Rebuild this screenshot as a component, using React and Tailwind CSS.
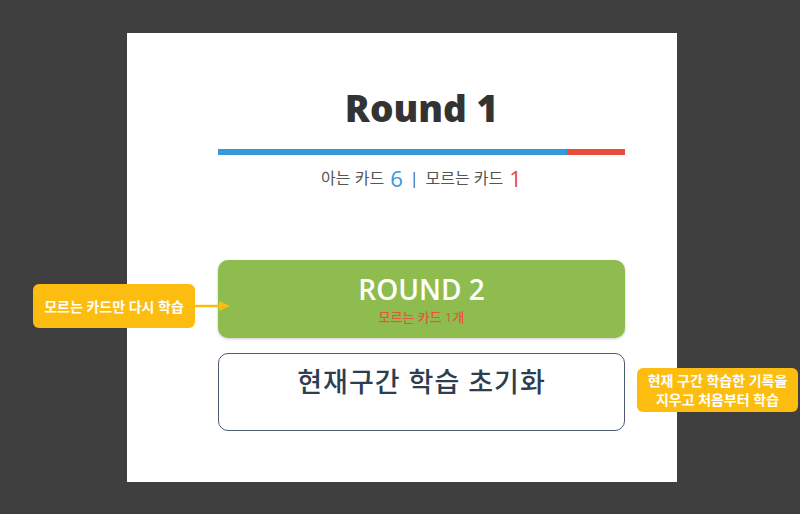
import React from 'react';

const known = 6;
const unknown = 1;

const App = () => {
  const total = known + unknown;
  return (
    <div
      className="relative w-[800px] h-[514px] bg-[#3f3f3f] overflow-hidden"
      style={{ fontFamily: '"Open Sans", "Noto Sans CJK KR", sans-serif' }}
    >
      <div className="ml-[127px] pt-[33px]">
        <div className="w-[550px] h-[449px] bg-white pl-[91px] pr-[52px] pt-[54px]">
          <h1 className="text-center text-[37px] leading-[42px] font-extrabold text-[#333333]">Round 1</h1>

          <div className="mt-[20px] flex h-[6px] w-full">
            <div className="h-full bg-[#3498db]" style={{ width: `${(known / total) * 100}%` }} />
            <div className="h-full flex-1 bg-[#e74c3c]" />
          </div>

          <div className="mt-[11px] flex items-center justify-center h-[24px] text-[16px] text-[#555555]">
            <span>아는 카드</span>
            <span className="ml-[6px] text-[22px] text-[#3498db]">{known}</span>
            <span className="mx-[7px] text-[#3a5a80]">|</span>
            <span>모르는 카드</span>
            <span className="ml-[6px] text-[22px] text-[#e74c3c]">{unknown}</span>
          </div>

          <button className="mt-[70px] flex h-[78px] w-full flex-col items-center rounded-[10px] bg-[#8fbc4f] pt-[10px] shadow-[0_1px_3px_rgba(0,0,0,0.2)]">
            <span className="text-[28px] leading-[38px] font-semibold text-white">ROUND 2</span>
            <span className="text-[13px] leading-[18px] font-medium text-[#e8543f]">모르는 카드 {unknown}개</span>
          </button>

          <button className="mt-[15px] flex h-[78px] w-full justify-center rounded-[10px] border border-[#4d5c70] bg-white pt-[9px]">
            <span className="text-[27px] leading-[38px] font-medium tracking-[1px] text-[#2c3e50]">현재구간 학습 초기화</span>
          </button>
        </div>
      </div>

      {/* callout: round 2 */}
      <div className="absolute left-[33px] top-[284px] flex items-center">
        <div className="flex h-[44px] w-[162px] items-center justify-center rounded-[6px] bg-[#fdbd10] text-[14px] font-bold text-white">
          모르는 카드만 다시 학습
        </div>
        <svg width="36" height="12" viewBox="0 0 36 12" className="block">
          <line x1="0" y1="6" x2="26" y2="6" stroke="#fdbd10" strokeWidth="2.5" />
          <polygon points="24,1 35,6 24,11" fill="#fdbd10" />
        </svg>
      </div>

      {/* callout: reset */}
      <div className="absolute left-[637px] top-[368px] flex h-[44px] w-[161px] flex-col items-center justify-center rounded-[6px] bg-[#fdbd10] text-[14px] leading-[19px] font-bold text-white">
        <span>현재 구간 학습한 기록을</span>
        <span>지우고 처음부터 학습</span>
      </div>
    </div>
  );
};

export default App;
